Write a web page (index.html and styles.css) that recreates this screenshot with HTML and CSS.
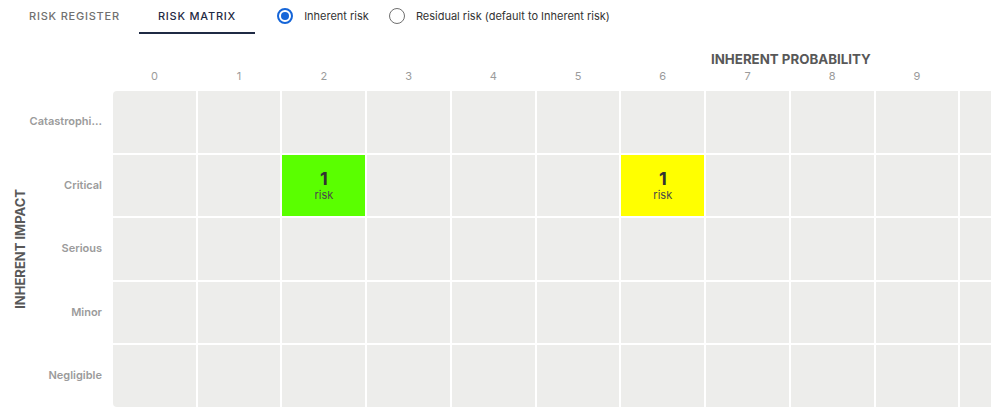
FILE: index.html
```html
<!DOCTYPE html>
<html>
<head>
<meta charset="utf-8">
<link rel="stylesheet" href="styles.css">
</head>
<body>
<div class="topbar">
  <div class="tabs">
    <div class="tab">RISK REGISTER</div>
    <div class="tab active">RISK MATRIX</div>
  </div>
  <div class="radios">
    <label class="radio"><span class="circle checked"></span>Inherent risk</label>
    <label class="radio"><span class="circle"></span>Residual risk (default to Inherent risk)</label>
  </div>
</div>
<div class="matrix">
  <div class="yaxis"><span>INHERENT IMPACT</span></div>
  <div class="rowlabels">
    <div class="rl">Catastrophi...</div>
    <div class="rl">Critical</div>
    <div class="rl">Serious</div>
    <div class="rl">Minor</div>
    <div class="rl">Negligible</div>
  </div>
  <div class="scroll">
    <div class="xtitle">INHERENT PROBABILITY</div>
    <div class="xnums">
      <span>0</span><span>1</span><span>2</span><span>3</span><span>4</span><span>5</span><span>6</span><span>7</span><span>8</span><span>9</span><span></span><span></span>
    </div>
    <div class="cells">
      <div class="c"></div><div class="c"></div><div class="c"></div><div class="c"></div><div class="c"></div><div class="c"></div><div class="c"></div><div class="c"></div><div class="c"></div><div class="c"></div><div class="c"></div><div class="c"></div>
      <div class="c"></div><div class="c"></div><div class="c green"><b>1</b><small>risk</small></div><div class="c"></div><div class="c"></div><div class="c"></div><div class="c yellow"><b>1</b><small>risk</small></div><div class="c"></div><div class="c"></div><div class="c"></div><div class="c"></div><div class="c"></div>
      <div class="c"></div><div class="c"></div><div class="c"></div><div class="c"></div><div class="c"></div><div class="c"></div><div class="c"></div><div class="c"></div><div class="c"></div><div class="c"></div><div class="c"></div><div class="c"></div>
      <div class="c"></div><div class="c"></div><div class="c"></div><div class="c"></div><div class="c"></div><div class="c"></div><div class="c"></div><div class="c"></div><div class="c"></div><div class="c"></div><div class="c"></div><div class="c"></div>
      <div class="c"></div><div class="c"></div><div class="c"></div><div class="c"></div><div class="c"></div><div class="c"></div><div class="c"></div><div class="c"></div><div class="c"></div><div class="c"></div><div class="c"></div><div class="c"></div>
    </div>
  </div>
</div>
</body>
</html>
```
FILE: styles.css
```css
* { box-sizing: border-box; }
html, body { margin: 0; padding: 0; background: #fff; }
body {
  font-family: Inter, "Noto Sans", "Liberation Sans", sans-serif;
  color: #333;
  width: 999px;
  height: 418px;
  overflow: hidden;
}
.topbar {
  display: flex;
  align-items: center;
  height: 34px;
  padding-left: 10px;
}
.tabs { display: flex; height: 34px; }
.tab {
  padding: 0 19px;
  height: 34px;
  line-height: 33px;
  font-size: 11px;
  font-weight: 500;
  letter-spacing: 0.78px;
  color: #707070;
  border-bottom: 2px solid transparent;
}
.tab.active {
  color: #1f2a44;
  border-bottom-color: #1f2a44;
}
.radios {
  display: flex;
  align-items: center;
  margin-left: 22px;
  gap: 20px;
  padding-bottom: 2px;
}
.radio {
  display: flex;
  align-items: center;
  font-size: 11px;
  color: #333;
  gap: 11px;
}
.circle {
  width: 16px;
  height: 16px;
  border-radius: 50%;
  border: 1.5px solid #6f6f6f;
  display: inline-flex;
  align-items: center;
  justify-content: center;
}
.circle.checked { border: 2px solid #1565d8; }
.circle.checked::after {
  content: "";
  width: 8px;
  height: 8px;
  border-radius: 50%;
  background: #1565d8;
}
.matrix { display: flex; }
.yaxis {
  width: 29px;
  padding-top: 57px;
  display: flex;
  align-items: center;
  justify-content: center;
}
.yaxis span {
  writing-mode: vertical-rl;
  transform: rotate(180deg);
  font-size: 13px;
  font-weight: 700;
  color: #585858;
  margin-left: 11px;
  white-space: nowrap;
}
.rowlabels {
  width: 84px;
  padding-top: 57px;
  padding-right: 11px;
  display: flex;
  flex-direction: column;
  gap: 2px;
}
.rl {
  height: 61.6px;
  line-height: 61.6px;
  text-align: right;
  font-size: 11px;
  font-weight: 600;
  color: #9b9b9b;
  white-space: nowrap;
}
.scroll {
  width: 878px;
  overflow: hidden;
}
.xtitle {
  margin-top: 17px;
  height: 17px;
  line-height: 17px;
  padding-left: 598px;
  font-size: 13.3px;
  font-weight: 700;
  color: #585858;
  white-space: nowrap;
}
.xnums {
  display: grid;
  grid-template-columns: repeat(12, 82.74px);
  column-gap: 2px;
  height: 16px;
  line-height: 16px;
  margin-bottom: 7px;
  width: max-content;
}
.xnums span {
  text-align: center;
  font-size: 11px;
  color: #9b9b9b;
}
.cells {
  display: grid;
  grid-template-columns: repeat(12, 82.74px);
  grid-auto-rows: 61.6px;
  gap: 2px;
  width: max-content;
  border-radius: 4px;
  overflow: hidden;
}
.c {
  background: #ededeb;
  display: flex;
  flex-direction: column;
  align-items: center;
  justify-content: center;
}
.c b {
  font-size: 18px;
  font-weight: 700;
  line-height: 20px;
  color: #333;
}
.c small {
  font-size: 11px;
  line-height: 13px;
  color: #4a4a4a;
}
.green { background: #5aff00; }
.yellow { background: #ffff00; }
```
